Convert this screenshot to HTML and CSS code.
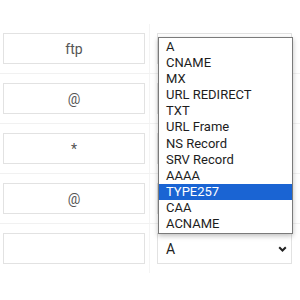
FILE: index.html
```html
<!DOCTYPE html>
<html>
<head>
<meta charset="utf-8">
<link rel="stylesheet" href="styles.css">
</head>
<body>
<div class="table">
  <div class="row">
    <div class="cell left"><div class="field">ftp</div></div>
    <div class="cell right"><div class="select"></div></div>
  </div>
  <div class="row">
    <div class="cell left"><div class="field">@</div></div>
    <div class="cell right"><div class="select"></div></div>
  </div>
  <div class="row">
    <div class="cell left"><div class="field">*</div></div>
    <div class="cell right"><div class="select"></div></div>
  </div>
  <div class="row">
    <div class="cell left"><div class="field">@</div></div>
    <div class="cell right"><div class="select"></div></div>
  </div>
  <div class="row">
    <div class="cell left"><div class="field"></div></div>
    <div class="cell right">
      <div class="select">
        <span>A</span>
        <svg class="chev" width="9" height="6" viewBox="0 0 9 6"><path d="M1.2 1.2 L4.5 4.5 L7.8 1.2" fill="none" stroke="#222" stroke-width="2"/></svg>
      </div>
    </div>
  </div>
</div>
<ul class="listbox">
  <li>A</li>
  <li>CNAME</li>
  <li>MX</li>
  <li>URL REDIRECT</li>
  <li>TXT</li>
  <li>URL Frame</li>
  <li>NS Record</li>
  <li>SRV Record</li>
  <li>AAAA</li>
  <li class="selected">TYPE257</li>
  <li>CAA</li>
  <li>ACNAME</li>
</ul>
</body>
</html>
```
FILE: styles.css
```css
html, body {
  margin: 0;
  padding: 0;
  background: #fff;
  width: 300px;
  height: 300px;
  overflow: hidden;
  font-family: Roboto, "Liberation Sans", sans-serif;
}
.table {
  padding-top: 24px;
}
.row {
  display: grid;
  grid-template-columns: 150px 150px;
  height: 49px;
  border-bottom: 1px solid #f1f1f1;
}
.row:last-child {
  border-bottom: none;
}
.cell {
  padding-top: 9px;
}
.left {
  border-right: 1px solid #f4f4f4;
  padding-left: 3px;
}
.right {
  padding-left: 7px;
}
.field {
  width: 140px;
  height: 29px;
  border: 1px solid #e2e2e2;
  color: #555;
  font-size: 14px;
  display: flex;
  align-items: center;
  justify-content: center;
}
.select {
  border: 1px solid #e2e2e2;
  color: #222;
  font-size: 14px;
  display: flex;
  align-items: center;
  justify-content: space-between;
  padding: 0 4px 0 8px;
  box-sizing: border-box;
  width: 135px;
  height: 31px;
}
.chev {
  display: block;
}
.listbox {
  position: absolute;
  left: 158px;
  top: 37px;
  width: 133px;
  margin: 0;
  padding: 1px 0;
  list-style: none;
  background: #fff;
  border: 1px solid #7a7a7a;
  box-shadow: 0 2px 5px rgba(0,0,0,0.25);
  font-size: 13px;
  color: #1d1d1d;
}
.listbox li {
  height: 16.1px;
  line-height: 16px;
  padding-left: 7px;
}
.listbox li.selected {
  background: #1a64d3;
  color: #fff;
}
```
